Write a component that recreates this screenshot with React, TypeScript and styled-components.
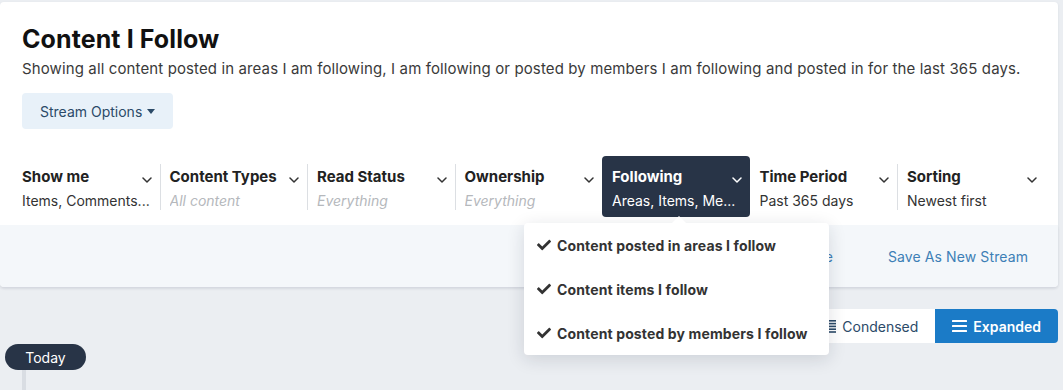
import React from "react";
import styled, { createGlobalStyle } from "styled-components";
import { FaCheck } from "react-icons/fa";

const GlobalStyle = createGlobalStyle`
  html, body { margin: 0; padding: 0; }
  body {
    background: #ebeef2;
    font-family: Inter, "Noto Sans", sans-serif;
    color: #333;
    -webkit-font-smoothing: antialiased;
  }
`;

const Page = styled.div`
  padding: 2px 5px 0 0;
  min-height: 388px;
  display: flex;
  flex-direction: column;
`;

const Card = styled.section`
  background: #fff;
  border-radius: 4px;
  box-shadow: 0 1px 3px rgba(30, 40, 60, 0.08);
`;

const Header = styled.div`
  padding: 22px 22px 0 22px;
`;

const Title = styled.h1`
  margin: 0;
  font-size: 25px;
  line-height: 30px;
  font-weight: 700;
  color: #111;
  letter-spacing: 0.1px;
`;

const Description = styled.p`
  margin: 5px 0 0;
  font-size: 15px;
  line-height: 20px;
  color: #3a3a3a;
  letter-spacing: 0.12px;
  white-space: nowrap;
`;

const StreamButton = styled.button`
  margin-top: 14px;
  height: 36px;
  padding: 0 18px;
  border: none;
  border-radius: 4px;
  background: #e8f1f9;
  color: #2b4a68;
  font-family: inherit;
  font-size: 14px;
  display: inline-flex;
  align-items: center;
  gap: 5px;
  cursor: pointer;
`;

const Caret = styled.span`
  width: 0;
  height: 0;
  border-left: 4px solid transparent;
  border-right: 4px solid transparent;
  border-top: 5px solid #2b4a68;
  margin-top: 1px;
`;

const FilterBar = styled.div`
  display: flex;
  align-items: center;
  padding: 0 0 0 12px;
  margin-top: 27px;
  height: 61px;
`;

const FilterItem = styled.div<{ $active?: boolean; $sep?: boolean }>`
  position: relative;
  width: 147.5px;
  box-sizing: border-box;
  display: flex;
  flex-direction: column;
  gap: 4px;
  padding: ${(p) => (p.$active ? "11px 8px 6px 9px" : "3px 8px 0 9px")};
  height: ${(p) => (p.$active ? "61px" : "46px")};
  border-left: ${(p) => (p.$sep ? "1px solid #dcdfe3" : "1px solid transparent")};
  background: ${(p) => (p.$active ? "#283447" : "transparent")};
  border-radius: ${(p) => (p.$active ? "4px" : "0")};
  color: ${(p) => (p.$active ? "#fff" : "#222")};
`;

const FilterHead = styled.div`
  display: flex;
  align-items: center;
  justify-content: space-between;
  font-size: 15px;
  line-height: 20px;
  font-weight: 700;
  white-space: nowrap;
`;

const Chevron = styled.svg`
  width: 10px;
  height: 6px;
  margin-top: 6px;
  flex: none;
`;

const FilterValue = styled.div<{ $muted?: boolean; $active?: boolean }>`
  font-size: 14px;
  line-height: 20px;
  white-space: nowrap;
  overflow: hidden;
  text-overflow: ellipsis;
  font-style: ${(p) => (p.$muted ? "italic" : "normal")};
  color: ${(p) => (p.$active ? "#fff" : p.$muted ? "#b5b8bc" : "#333")};
`;

const Footer = styled.div`
  margin-top: 8px;
  height: 62px;
  background: #f4f7fa;
  border-radius: 0 0 4px 4px;
  display: flex;
  align-items: center;
  justify-content: flex-end;
  gap: 55px;
  padding-right: 30px;
  box-shadow: 0 2px 3px rgba(30, 40, 60, 0.06);
`;

const FooterLink = styled.a`
  font-size: 14px;
  color: #3d7fb6;
  text-decoration: none;
  letter-spacing: 0.1px;
`;

const Menu = styled.div`
  position: absolute;
  top: 67px;
  left: -79px;
  width: 305px;
  background: #fff;
  border-radius: 4px;
  box-shadow: 0 4px 18px rgba(20, 30, 50, 0.14);
  z-index: 10;
  &::before {
    content: "";
    position: absolute;
    top: -7px;
    left: 148px;
    border-left: 7px solid transparent;
    border-right: 7px solid transparent;
    border-bottom: 7px solid #fff;
  }
`;

const MenuItem = styled.div`
  height: 44px;
  display: flex;
  align-items: center;
  gap: 6px;
  padding-left: 13px;
  font-size: 14px;
  font-weight: 700;
  color: #333;
  letter-spacing: 0.13px;
  white-space: nowrap;
  svg {
    width: 14px;
    height: 14px;
    color: #333;
  }
`;

const ToggleRow = styled.div`
  margin-top: 22px;
  display: flex;
  justify-content: flex-end;
`;

const ToggleButton = styled.button<{ $active?: boolean }>`
  height: 34px;
  border: none;
  padding: 0 17px;
  display: inline-flex;
  align-items: center;
  gap: 6px;
  font-family: inherit;
  font-size: 14px;
  font-weight: ${(p) => (p.$active ? 600 : 400)};
  background: ${(p) => (p.$active ? "#1b7bc7" : "#fff")};
  color: ${(p) => (p.$active ? "#fff" : "#2b4a68")};
  border-radius: ${(p) => (p.$active ? "0 4px 4px 0" : "4px 0 0 4px")};
  cursor: pointer;
`;

const Timeline = styled.div`
  margin-top: 1px;
  display: flex;
  flex-direction: column;
  align-items: flex-start;
  padding-left: 5px;
  flex: 1;
`;

const TodayPill = styled.span`
  width: 81px;
  height: 26px;
  border-radius: 13px;
  background: #283447;
  color: #fff;
  font-size: 14px;
  display: flex;
  align-items: center;
  justify-content: center;
`;

const TimelineLine = styled.div`
  width: 4px;
  margin-left: 17px;
  flex: 1;
  background: #d9dde3;
`;

const ChevronIcon = ({ color }: { color: string }) => (
  <Chevron viewBox="0 0 10 6">
    <path d="M1 1l4 4 4-4" fill="none" stroke={color} strokeWidth="1.5" strokeLinecap="round" strokeLinejoin="round" />
  </Chevron>
);

const filters = [
  { title: "Show me", value: "Items, Comments...", muted: false },
  { title: "Content Types", value: "All content", muted: true },
  { title: "Read Status", value: "Everything", muted: true },
  { title: "Ownership", value: "Everything", muted: true },
  { title: "Following", value: "Areas, Items, Me...", muted: false, active: true },
  { title: "Time Period", value: "Past 365 days", muted: false },
  { title: "Sorting", value: "Newest first", muted: false },
];

const menuItems = [
  "Content posted in areas I follow",
  "Content items I follow",
  "Content posted by members I follow",
];

export default function App() {
  return (
    <>
      <GlobalStyle />
      <Page>
        <Card>
          <Header>
            <Title>Content I Follow</Title>
            <Description>
              Showing all content posted in areas I am following, I am following or posted by members I am following and posted in for the last 365 days.
            </Description>
            <StreamButton>
              Stream Options <Caret />
            </StreamButton>
          </Header>
          <FilterBar>
            {filters.map((f, i) => {
              const prevActive = i > 0 && filters[i - 1].active;
              const sep = i > 0 && !f.active && !prevActive;
              return (
                <FilterItem key={f.title} $active={f.active} $sep={sep}>
                  <FilterHead>
                    {f.title}
                    <ChevronIcon color={f.active ? "#fff" : "#333"} />
                  </FilterHead>
                  <FilterValue $muted={f.muted} $active={f.active}>
                    {f.value}
                  </FilterValue>
                  {f.active && (
                    <Menu>
                      {menuItems.map((m) => (
                        <MenuItem key={m}>
                          <FaCheck />
                          {m}
                        </MenuItem>
                      ))}
                    </Menu>
                  )}
                </FilterItem>
              );
            })}
          </FilterBar>
          <Footer>
            <FooterLink href="#">Save</FooterLink>
            <FooterLink href="#">Save As New Stream</FooterLink>
          </Footer>
        </Card>
        <ToggleRow>
          <ToggleButton>
            <svg width="14" height="13" viewBox="0 0 14 13">
              <g fill="#2b4a68">
                <rect x="0" y="0" width="14" height="1.6" />
                <rect x="0" y="2.8" width="14" height="1.6" />
                <rect x="0" y="5.6" width="14" height="1.6" />
                <rect x="0" y="8.4" width="14" height="1.6" />
                <rect x="0" y="11.2" width="14" height="1.6" />
              </g>
            </svg>
            Condensed
          </ToggleButton>
          <ToggleButton $active>
            <svg width="15" height="12" viewBox="0 0 15 12">
              <g fill="#fff">
                <rect x="0" y="0" width="15" height="2" rx="0.5" />
                <rect x="0" y="5" width="15" height="2" rx="0.5" />
                <rect x="0" y="10" width="15" height="2" rx="0.5" />
              </g>
            </svg>
            Expanded
          </ToggleButton>
        </ToggleRow>
        <Timeline>
          <TodayPill>Today</TodayPill>
          <TimelineLine />
        </Timeline>
      </Page>
    </>
  );
}
